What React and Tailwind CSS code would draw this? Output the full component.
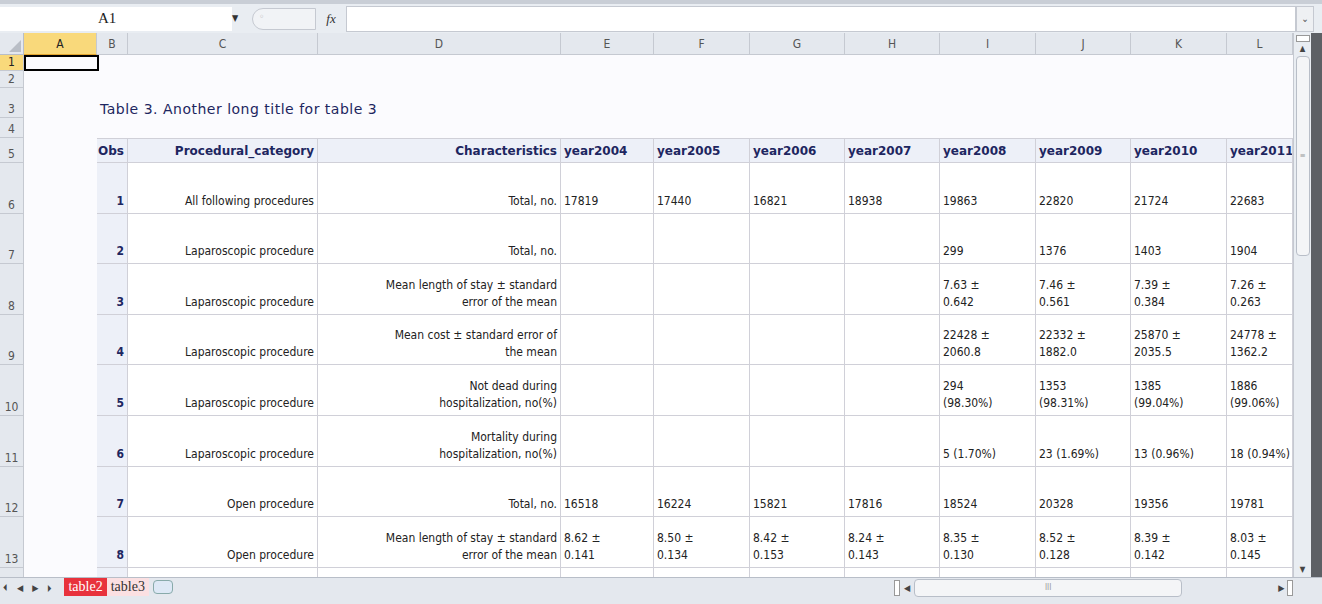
import React from "react";

const cols = [
  ["A", 73], ["B", 31], ["C", 190], ["D", 243], ["E", 93], ["F", 96], ["G", 95],
  ["H", 95], ["I", 96], ["J", 95], ["K", 96], ["L", 66],
];
const years = ["year2004", "year2005", "year2006", "year2007", "year2008", "year2009", "year2010", "year2011"];
const e4 = ["", "", "", ""];
const rows = [
  [1, "All following procedures", ["Total, no."], ["17819", "17440", "16821", "18938", "19863", "22820", "21724", "22683"]],
  [2, "Laparoscopic procedure", ["Total, no."], [...e4, "299", "1376", "1403", "1904"]],
  [3, "Laparoscopic procedure", ["Mean length of stay ± standard", "error of the mean"], [...e4, "7.63 ±|0.642", "7.46 ±|0.561", "7.39 ±|0.384", "7.26 ±|0.263"]],
  [4, "Laparoscopic procedure", ["Mean cost ± standard error of", "the mean"], [...e4, "22428 ±|2060.8", "22332 ±|1882.0", "25870 ±|2035.5", "24778 ±|1362.2"]],
  [5, "Laparoscopic procedure", ["Not dead during", "hospitalization, no(%)"], [...e4, "294|(98.30%)", "1353|(98.31%)", "1385|(99.04%)", "1886|(99.06%)"]],
  [6, "Laparoscopic procedure", ["Mortality during", "hospitalization, no(%)"], [...e4, "5 (1.70%)", "23 (1.69%)", "13 (0.96%)", "18 (0.94%)"]],
  [7, "Open procedure", ["Total, no."], ["16518", "16224", "15821", "17816", "18524", "20328", "19356", "19781"]],
  [8, "Open procedure", ["Mean length of stay ± standard", "error of the mean"], ["8.62 ±|0.141", "8.50 ±|0.134", "8.42 ±|0.153", "8.24 ±|0.143", "8.35 ±|0.130", "8.52 ±|0.128", "8.39 ±|0.142", "8.03 ±|0.145"]],
];
const font = { fontFamily: "'DejaVu Sans Condensed', 'Liberation Sans', sans-serif" };
const grid = "border-r border-b border-[#d0d0d8]";

function RowHead({ n, h, active }) {
  return (
    <div className={`w-[24px] shrink-0 flex items-end justify-center pb-[2px] text-[12px] leading-none overflow-hidden border-b border-r border-[#c5c9d1] ${active ? "bg-[#f9d97b] text-[#222]" : "bg-[#e4e8ee] text-[#555]"}`} style={{ height: h }}>
      {n}
    </div>
  );
}

function Lines({ text }) {
  return text.split("|").map((t, i) => <div key={i}>{t}</div>);
}

export default function App() {
  return (
    <div className="w-[1322px] h-[604px] overflow-hidden bg-[#fbfbfe] flex flex-col" style={font}>
      {/* formula bar */}
      <div className="h-[33px] shrink-0 bg-[#e9edf2] border-t-[4px] border-[#c9ced6] flex items-center">
        <div className="w-[232px] h-[24px] bg-white flex items-center pl-[98px] text-[15px] text-[#222]" style={{ fontFamily: "'Liberation Serif', serif" }}>A1</div>
        <div className="w-[20px] text-[9px] text-[#333]">▼</div>
        <div className="w-[64px] h-[22px] rounded-l-full border border-[#c5c9d1] bg-[#f1f3f6] text-[10px] text-[#aaa] pl-[6px]">◦</div>
        <div className="w-[30px] text-center italic text-[13px] text-[#333]" style={{ fontFamily: "'Liberation Serif', serif" }}>fx</div>
        <div className="flex-1 h-[26px] bg-white border border-[#c5c9d1]" />
        <div className="w-[18px] h-[26px] bg-[#eef0f3] border border-[#c5c9d1] text-[10px] text-[#555] flex items-center justify-center">⌄</div>
        <div className="w-[8px]" />
      </div>
      <div className="flex-1 flex min-h-0">
        <div className="w-[1293px] flex flex-col min-h-0 overflow-hidden">
          {/* column headers */}
          <div className="flex h-[22px] shrink-0">
            <div className="w-[24px] bg-[#e4e8ee] border-r border-b border-[#b8bec8] relative overflow-hidden">
              <div className="absolute right-[2px] bottom-[2px] w-0 h-0 border-l-[12px] border-l-transparent border-b-[12px] border-b-[#b9bec6]" />
            </div>
            {cols.map(([c, w], i) => (
              <div key={c} className={`shrink-0 flex items-center justify-center text-[12px] border-r border-b border-[#c5c9d1] ${i === 0 ? "bg-[#f9d97b] text-[#222] border-b-[#e2a530]" : "bg-[#e4e8ee] text-[#555]"}`} style={{ width: w }}>{c}</div>
            ))}
          </div>
          <div className="flex h-[16px] shrink-0"><RowHead n={1} h={16} active /><div className="w-[75px] h-[16px] border-2 border-black" /></div>
          <div className="flex h-[17px] shrink-0"><RowHead n={2} h={17} /></div>
          <div className="flex h-[30px] shrink-0">
            <RowHead n={3} h={30} />
            <div className="pl-[76px] pt-[12px] text-[14px] leading-[18px] text-[#1d2660] tracking-[0.5px]" style={{ fontFamily: "'DejaVu Sans', sans-serif" }}>Table 3. Another long title for table 3</div>
          </div>
          <div className="flex h-[20px] shrink-0"><RowHead n={4} h={20} /></div>
          <div className="flex h-[25px] shrink-0">
            <RowHead n={5} h={25} />
            <div className="w-[73px]" />
            {["Obs", "Procedural_category", "Characteristics", ...years].map((t, i) => (
              <div key={t} className={`shrink-0 bg-[#edf0f8] border-t ${grid} border-t-[#d0d0d8] font-bold text-[12px] leading-[16px] text-[#1d2660] flex items-end pb-[3px] px-[3px] overflow-hidden whitespace-nowrap ${i < 3 ? "justify-end" : ""}`} style={{ width: cols[i + 1][1], fontFamily: "'DejaVu Sans', sans-serif" }}>{t}</div>
            ))}
          </div>
          {rows.map(([n, cat, ch, vals]) => (
            <div key={n} className="flex h-[50.6px] shrink-0">
              <RowHead n={n + 5} h={50.6} />
              <div className="w-[73px]" />
              <div className={`w-[31px] shrink-0 bg-[#edf0f8] ${grid} font-bold text-[12px] text-[#1d2660] flex items-end justify-end px-[3px] pb-[3px]`}>{n}</div>
              <div className={`w-[190px] shrink-0 bg-white ${grid} text-[12px] text-[#222] flex items-end justify-end px-[3px] pb-[3px]`}>{cat}</div>
              <div className={`w-[243px] shrink-0 bg-white ${grid} text-[12px] text-[#222] flex flex-col justify-end items-end px-[3px] pb-[3px] leading-[17px]`}>
                {ch.map((t) => <div key={t}>{t}</div>)}
              </div>
              {vals.map((v, i) => (
                <div key={i} className={`shrink-0 bg-white ${grid} text-[12px] text-[#222] flex flex-col justify-end px-[3px] pb-[3px] leading-[17px] whitespace-nowrap overflow-hidden`} style={{ width: cols[i + 4][1] }}>
                  <Lines text={v} />
                </div>
              ))}
            </div>
          ))}
          <div className="flex h-[9px] shrink-0 overflow-hidden">
            <div className="w-[24px] h-[9px] bg-[#e4e8ee] border-r border-[#c5c9d1]" />
            <div className="w-[73px]" />
            <div className={`w-[31px] shrink-0 bg-[#edf0f8] border-r border-[#d0d0d8]`} />
            <div className={`w-[190px] shrink-0 bg-white border-r border-[#d0d0d8]`} />
            <div className={`w-[243px] shrink-0 bg-white border-r border-[#d0d0d8]`} />
            {cols.slice(4).map(([c, w]) => (
              <div key={c} className="shrink-0 bg-white border-r border-[#d0d0d8]" style={{ width: w }} />
            ))}
          </div>
        </div>
        {/* vertical scrollbar */}
        <div className="w-[18px] bg-[#e9edf2] border-l border-[#c5c9d1] flex flex-col items-center">
          <div className="w-[14px] h-[7px] border border-[#999] bg-white mt-[2px]" />
          <div className="text-[8px] leading-[10px] text-[#444] mt-[2px]">▲</div>
          <div className="w-[14px] h-[200px] bg-[#f4f5f7] border border-[#b8bec8] rounded-sm mt-[2px] flex items-center justify-center text-[8px] text-[#999]">≡</div>
          <div className="flex-1" />
          <div className="text-[8px] leading-[10px] text-[#444] mb-[2px]">▼</div>
        </div>
        <div className="w-[11px] bg-[#5d6065]" />
      </div>
      {/* sheet tabs */}
      <div className="h-[27px] shrink-0 bg-[#e4e8ee] border-t border-[#b8bec8] flex items-start">
        <div className="flex gap-[9px] pl-[3px] pt-[4px] text-[9px] leading-[12px] text-[#444]">
          <span>⏴</span><span>◀</span><span>▶</span><span>⏵</span>
        </div>
        <div className="ml-[12px] h-[18px] px-[4px] bg-[#e8323c] text-white text-[14px] leading-[18px]" style={{ fontFamily: "'Liberation Serif', serif" }}>table2</div>
        <div className="h-[18px] px-[4px] bg-[#fbe0e2] text-[#333] text-[14px] leading-[18px]" style={{ fontFamily: "'Liberation Serif', serif" }}>table3</div>
        <div className="ml-[4px] w-[20px] h-[14px] mt-[2px] border border-[#8aa] bg-[#dde8f5] rounded-sm" />
        <div className="ml-[721px] mt-[2px] w-[6px] h-[16px] border border-[#999] bg-white" />
        <div className="ml-[4px] mt-[4px] text-[9px] leading-[12px] text-[#444]">◀</div>
        <div className="ml-[4px] mt-[1px] w-[268px] h-[18px] bg-[#f4f5f7] border border-[#b8bec8] rounded-sm flex items-center justify-center text-[8px] leading-none text-[#999]">III</div>
        <div className="ml-[96px] mt-[4px] text-[9px] leading-[12px] text-[#444]">▶</div>
        <div className="ml-[3px] mt-[2px] w-[6px] h-[16px] border border-[#999] bg-white" />
      </div>
    </div>
  );
}
